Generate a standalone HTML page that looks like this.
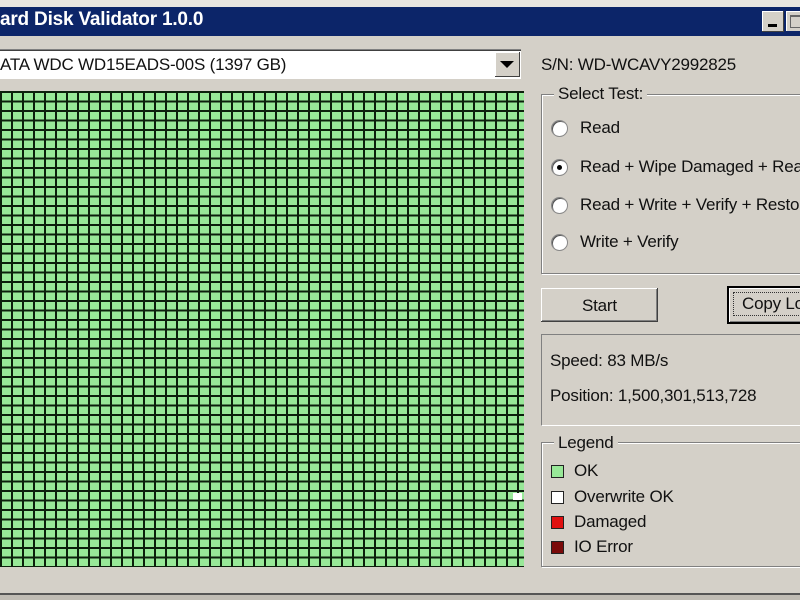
<!DOCTYPE html>
<html><head><style>
body{margin:0;width:800px;height:600px;overflow:hidden;background:#d4d0c8;font-family:"Liberation Sans",sans-serif;color:#111;position:relative}
.a{position:absolute}
.t{font-size:17px;white-space:nowrap;letter-spacing:-0.2px}
.grp{border:1px solid #808080;box-shadow:1px 1px 0 #fff, inset 1px 1px 0 #fff}
.radio{width:15px;height:15px;border-radius:50%;background:#fff;border:1px solid #888;box-shadow:inset 1px 1px 0 #555}
.sq{width:11px;height:11px;border:1px solid #222}
</style></head><body>
<div class="a" style="left:0;top:0;width:800px;height:7px;background:#e8e6e0"></div>
<div class="a" style="left:0;top:7px;width:800px;height:29px;background:#0c2569"></div>
<div class="a t" style="left:0;top:9px;color:#fff;font-weight:bold;font-size:19px">ard Disk Validator 1.0.0</div>
<div class="a" style="left:762px;top:11px;width:21px;height:20px;background:#d4d0c8;border-right:1px solid #404040;border-bottom:1px solid #404040;box-shadow:inset 1px 1px 0 #fff"><div class="a" style="left:6px;top:13px;width:9px;height:3px;background:#000"></div></div>
<div class="a" style="left:786px;top:11px;width:20px;height:20px;background:#d4d0c8;box-shadow:inset 1px 1px 0 #fff"><div class="a" style="left:4px;top:4px;width:11px;height:10px;border:1px solid #666;border-top-width:2px"></div></div>
<div class="a" style="left:0;top:49px;width:521px;height:29px;background:#fff;border-bottom:1px solid #fff;box-shadow:inset 0 1px 0 #808080,inset 0 2px 0 #404040"></div>
<div class="a t" style="left:0;top:55px">ATA WDC WD15EADS-00S (1397 GB)</div>
<div class="a" style="left:495px;top:52px;width:24px;height:24px;background:#d4d0c8;border-right:1px solid #404040;border-bottom:1px solid #404040;box-shadow:inset 1px 1px 0 #fff"></div>
<div class="a" style="left:500px;top:61px;width:0;height:0;border-left:7px solid transparent;border-right:7px solid transparent;border-top:7px solid #000"></div>
<div class="a t" style="left:541px;top:55px">S/N: WD-WCAVY2992825</div>
<div class="a" style="left:0;top:91px;width:524px;height:476px;background:
repeating-linear-gradient(to right,#0c1f0c 0 2px,transparent 2px 11px),
repeating-linear-gradient(to bottom,#0c1f0c 0 2px,transparent 2px 9.5px),#98e898"></div>
<div class="a" style="left:513px;top:493px;width:9px;height:7px;background:#fff"></div>
<div class="a grp" style="left:541px;top:94px;width:270px;height:178px"></div>
<div class="a t" style="left:554px;top:84px;background:#d4d0c8;padding:0 4px">Select Test:</div>
<div class="a radio" style="left:551px;top:120px"></div>
<div class="a t" style="left:580px;top:118px">Read</div>
<div class="a radio" style="left:551px;top:159px"><div class="a" style="left:5px;top:5px;width:5px;height:5px;border-radius:50%;background:#000"></div></div>
<div class="a t" style="left:580px;top:157px">Read + Wipe Damaged + Read</div>
<div class="a radio" style="left:551px;top:197px"></div>
<div class="a t" style="left:580px;top:195px">Read + Write + Verify + Restore</div>
<div class="a radio" style="left:551px;top:234px"></div>
<div class="a t" style="left:580px;top:232px">Write + Verify</div>
<div class="a" style="left:541px;top:288px;width:116px;height:33px;border-right:1px solid #404040;border-bottom:1px solid #404040;box-shadow:inset 1px 1px 0 #fff,inset -1px -1px 0 #808080"></div>
<div class="a t" style="left:582px;top:296px">Start</div>
<div class="a" style="left:727px;top:286px;width:80px;height:34px;border:2px solid #000;box-shadow:inset 1px 1px 0 #fff,inset -1px -1px 0 #808080"></div>
<div class="a" style="left:733px;top:292px;width:70px;height:22px;border:1px dotted #333"></div>
<div class="a t" style="left:742px;top:294px">Copy Log</div>
<div class="a" style="left:541px;top:334px;width:270px;height:90px;border-top:1px solid #808080;border-left:1px solid #808080;border-bottom:1px solid #fff"></div>
<div class="a t" style="left:550px;top:351px">Speed: 83 MB/s</div>
<div class="a t" style="left:550px;top:386px">Position: 1,500,301,513,728</div>
<div class="a grp" style="left:541px;top:442px;width:270px;height:123px"></div>
<div class="a t" style="left:554px;top:433px;background:#d4d0c8;padding:0 4px">Legend</div>
<div class="a sq" style="left:551px;top:465px;background:#98e898"></div>
<div class="a t" style="left:574px;top:461px">OK</div>
<div class="a sq" style="left:551px;top:491px;background:#fff"></div>
<div class="a t" style="left:574px;top:487px">Overwrite OK</div>
<div class="a sq" style="left:551px;top:516px;background:#e01010"></div>
<div class="a t" style="left:574px;top:512px">Damaged</div>
<div class="a sq" style="left:551px;top:541px;background:#7a0a0a"></div>
<div class="a t" style="left:574px;top:537px">IO Error</div>
<div class="a" style="left:0;top:593px;width:800px;height:2px;background:#555"></div>
<div class="a" style="left:0;top:595px;width:800px;height:5px;background:#c0bcb4"></div>
</body></html>
